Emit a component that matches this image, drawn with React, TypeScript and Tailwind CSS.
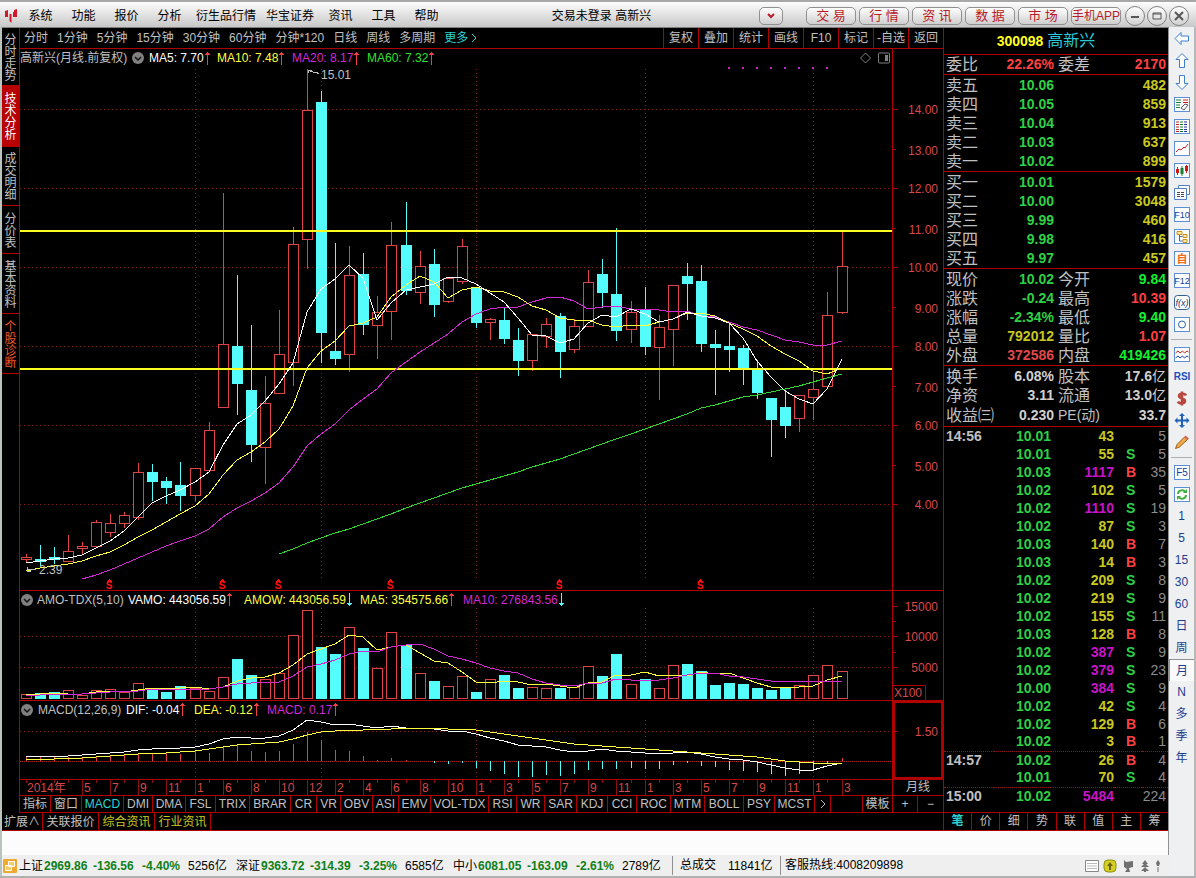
import type { ReactNode } from "react";

// Desktop trading terminal: menu bar, k-line chart with indicators, quote
// panel, tool strip and index status bar.

const RED = "#e04343";
const CYAN = "#54fcfc";
const GRID = "#861c1c";
const FRAME = "#b00000";

type Candle = [dir: 1 | 0, high: number, top: number, bottom: number, low: number];

// y positions on the price plot, 1 = up (hollow), 0 = down (filled)
const CANDLES: Candle[] = [
  [1, 554, 557, 559, 561], [0, 545, 559, 561, 565], [0, 547, 557, 559, 563], [1, 535, 551, 561, 561],
  [1, 542, 546, 548, 554], [1, 520, 522, 546, 546], [1, 514, 523, 532, 536], [1, 512, 515, 523, 527],
  [1, 463, 472, 517, 519], [0, 464, 472, 481, 500], [0, 477, 481, 487, 503], [0, 462, 485, 495, 510],
  [1, 468, 468, 495, 500], [1, 422, 430, 470, 470], [1, 193, 344, 407, 407], [0, 275, 346, 383, 414],
  [0, 325, 390, 444, 461], [1, 376, 403, 447, 483], [1, 310, 354, 393, 393], [1, 227, 244, 362, 385],
  [1, 69, 110, 239, 268], [0, 91, 102, 332, 362], [0, 243, 351, 358, 364], [1, 246, 275, 354, 371],
  [0, 253, 274, 324, 334], [1, 296, 312, 325, 358], [1, 222, 245, 311, 339], [0, 202, 245, 290, 294],
  [1, 251, 266, 292, 303], [0, 249, 264, 304, 316], [1, 278, 278, 301, 302], [1, 239, 246, 281, 283],
  [0, 287, 288, 322, 327], [1, 318, 319, 322, 339], [0, 308, 320, 338, 343], [0, 328, 340, 360, 375],
  [1, 334, 334, 360, 370], [1, 318, 324, 336, 347], [0, 313, 316, 351, 377], [1, 319, 326, 349, 352],
  [1, 270, 282, 326, 326], [0, 259, 274, 292, 307], [0, 228, 294, 330, 340], [1, 301, 312, 329, 342],
  [0, 287, 310, 346, 354], [1, 315, 327, 347, 399], [1, 285, 285, 329, 365], [0, 263, 276, 283, 319],
  [0, 265, 281, 343, 351], [0, 330, 344, 347, 394], [0, 322, 346, 349, 371], [0, 345, 348, 369, 384],
  [0, 360, 369, 392, 398], [0, 398, 398, 419, 456], [0, 390, 407, 425, 437], [1, 395, 395, 418, 431],
  [1, 372, 389, 397, 419], [1, 292, 315, 386, 386], [1, 232, 266, 312, 313],
];

const MA5 = [
  563, 561, 559, 558, 555, 548, 541, 531, 517, 503, 496, 490, 482, 472, 445, 424, 415, 401, 384, 363,
  312, 289, 279, 265, 278, 320, 303, 290, 287, 284, 277, 278, 284, 293, 302, 318, 335, 336, 343, 339,
  323, 315, 317, 309, 314, 322, 319, 312, 316, 318, 323, 338, 361, 377, 391, 399, 404, 389, 359,
];
const MA10 = [
  571, 568, 566, 564, 561, 556, 552, 545, 537, 530, 522, 514, 506, 494, 475, 460, 452, 442, 429, 406,
  368, 351, 341, 326, 323, 317, 297, 285, 276, 282, 298, 290, 287, 291, 292, 297, 306, 310, 318, 320,
  320, 325, 327, 325, 326, 322, 319, 313, 313, 316, 323, 329, 336, 346, 354, 361, 371, 374, 368,
];
const MA20 = [
  579, 575, 570, 564, 558, 552, 546, 541, 536, 529, 517, 508, 501, 493, 483, 467, 446, 434, 424, 410,
  399, 389, 373, 362, 352, 343, 334, 322, 314, 309, 307, 307, 302, 298, 297, 301, 309, 307, 306, 309,
  309, 310, 312, 311, 316, 317, 322, 327, 330, 335, 340, 342, 345, 345, 341,
];
const MA60 = [
  554, 549, 543, 538, 533, 529, 524, 519, 514, 508, 503, 498, 493, 488, 484, 480, 476, 472, 467, 463,
  459, 454, 449, 444, 439, 434, 429, 424, 419, 414, 408, 405, 401, 397, 395, 392, 389, 386, 382, 378, 374,
];

const VOLUME_TOPS = [
  694, 693, 692, 690, 695, 690, 689, 692, 683, 688, 692, 686, 688, 691, 677, 659, 675, 679, 673, 635,
  610, 647, 654, 627, 648, 668, 632, 645, 673, 681, 686, 676, 692, 679, 675, 688, 687, 688, 688, 687,
  666, 676, 654, 684, 679, 688, 665, 664, 671, 685, 683, 684, 688, 690, 687, 685, 675, 665, 671,
];
const VOL_MA5 = [
  695, 694, 693, 694, 694, 692, 691, 692, 690, 688, 689, 688, 687, 689, 687, 681, 678, 677, 673, 665,
  654, 649, 644, 635, 637, 650, 647, 645, 653, 661, 663, 672, 682, 683, 681, 682, 685, 684, 686, 688,
  683, 682, 675, 675, 672, 676, 675, 676, 672, 674, 673, 678, 683, 687, 687, 687, 686, 680, 676,
];
const VOL_MA10 = [
  695, 695, 694, 694, 694, 693, 692, 691, 691, 689, 689, 689, 689, 689, 687, 684, 683, 682, 682, 676,
  667, 664, 660, 654, 651, 652, 647, 645, 644, 649, 656, 659, 663, 668, 671, 673, 679, 683, 685, 686,
  683, 683, 679, 680, 680, 680, 678, 675, 673, 673, 676, 677, 679, 681, 681, 681, 681, 681, 681,
];

const MACD_BARS = [
  5, 5, 4, 4, 4, 4, 5, 6, 8, 8, 8, 7, 10, 8, 14, 16, 10, 9, 10, 17, 29, 21, 11, 10, 5, 1, 3, 1, 0, -2,
  -3, -2, -7, -10, -13, -16, -16, -14, -15, -13, -9, -8, -8, -7, -8, -8, -4, -2, -5, -6, -9, -10, -11,
  -13, -15, -13, -10, -2, 3,
];
const DIF = [
  757, 756, 756, 756, 755, 754, 753, 752, 750, 749, 748, 748, 747, 744, 739, 737, 738, 738, 736, 730,
  720, 722, 725, 724, 726, 728, 726, 728, 728, 729, 731, 731, 734, 738, 741, 745, 746, 747, 750, 752,
  751, 749, 751, 752, 753, 754, 753, 752, 754, 757, 759, 760, 762, 765, 768, 770, 770, 766, 763,
];
const DEA = [
  760, 759, 759, 758, 758, 757, 756, 755, 754, 753, 753, 752, 751, 749, 747, 745, 744, 743, 742, 739,
  735, 732, 731, 730, 730, 729, 729, 728, 728, 728, 729, 729, 730, 732, 734, 736, 738, 740, 742, 744,
  745, 746, 747, 748, 749, 750, 751, 752, 753, 754, 755, 756, 757, 759, 761, 762, 763, 764, 763,
];

const MONTHS = [
  "5", "7", "9", "11", "1", "6", "8", "10", "12", "2", "4", "6", "8", "10",
  "1", "3", "5", "7", "9", "11", "1", "3", "5", "7", "9", "11", "1", "3",
];

const barX = (i: number) => 26 + 14 * i + Math.floor((i + 3.5) / 15.2);
const line = (values: number[], start = 0) =>
  values.map((y, i) => `${barX(i + start)},${y}`).join(" ");

function Series({ values, start, color }: { values: number[]; start?: number; color: string }) {
  return <polyline points={line(values, start)} fill="none" stroke={color} strokeWidth="1" />;
}

function Grid({ rows, top, bottom }: { rows: number[]; top: number; bottom: number }) {
  return (
    <g stroke={GRID} strokeDasharray="1 3">
      {rows.map((y) => (
        <line key={y} x1="20" x2="892" y1={y + 0.5} y2={y + 0.5} />
      ))}
      {[12, 21, 32, 44, 56].map((i) => (
        <line key={i} x1={barX(i) + 0.5} x2={barX(i) + 0.5} y1={top} y2={bottom} />
      ))}
    </g>
  );
}

function Plot({ top, height, className, label, children }: {
  top: number;
  height: number;
  className: string;
  label: string;
  children: ReactNode;
}) {
  return (
    <svg
      role="img"
      aria-label={label}
      viewBox={`20 ${top} 872 ${height}`}
      preserveAspectRatio="none"
      shapeRendering="crispEdges"
      className={`block w-full ${className}`}
    >
      {children}
    </svg>
  );
}

function Bar({ x, top, bottom, up }: { x: number; top: number; bottom: number; up: boolean }) {
  return up ? (
    <rect x={x - 4.5} y={top + 0.5} width="10" height={bottom - top} fill="#000" stroke={RED} />
  ) : (
    <rect x={x - 5} y={top} width="11" height={bottom - top + 1} fill={CYAN} />
  );
}

function PricePlot() {
  return (
    <Plot top={67} height={523} className="h-[523px]" label="月线">
      <Grid rows={[109, 188, 267, 346, 425, 504]} top={69} bottom={578} />
      {CANDLES.map(([dir, high, top, bottom, low], i) => (
        <g key={i}>
          <rect x={barX(i)} y={high} width="1" height={low + 1 - high} fill={dir ? RED : CYAN} />
          <Bar x={barX(i)} top={top} bottom={bottom} up={dir === 1} />
        </g>
      ))}
      <rect x="20" y="230" width="872" height="2" fill="#ffff20" />
      <rect x="20" y="368" width="872" height="2" fill="#ffff20" />
      <Series values={MA60} start={18} color="#2fd62f" />
      <Series values={MA20} start={4} color="#d428d4" />
      <Series values={MA10} color="#ffff40" />
      <Series values={MA5} color="#ffffff" />
      {[728, 742, 756, 770, 784, 798, 812, 826].map((x) => (
        <rect key={x} x={x} y="67" width="2" height="2" fill="#c02ac0" />
      ))}
      <path d="M308 73V70H312M308 70L313 72L316 72L319 74" fill="none" stroke="#c0c0c0" />
      <path d="M27 567V571H31M27 569H36" fill="none" stroke="#c0c0c0" />
      <g fill="#c0c0c0" fontSize="12">
        <text x="321" y="79">15.01</text>
        <text x="39" y="574">2.39</text>
      </g>
      {/* ex-rights marks */}
      <g fill="#ff1010" fontSize="10" fontWeight="700" textAnchor="middle">
        {[109, 222, 278, 390, 559, 700].map((x) => (
          <g key={x}>
            <path d={`M${x} 579l3 3h-6z`} />
            <text x={x} y="589">S</text>
          </g>
        ))}
      </g>
    </Plot>
  );
}

function VolumePlot() {
  return (
    <Plot top={608} height={92} className="h-[92px]" label="AMO-TDX">
      <Grid rows={[636, 667]} top={608} bottom={698} />
      {VOLUME_TOPS.map((top, i) => (
        <Bar key={i} x={barX(i)} top={top} bottom={698} up={CANDLES[i][0] === 1} />
      ))}
      <Series values={VOL_MA5} color="#ffff40" />
      <Series values={VOL_MA10} color="#d428d4" />
    </Plot>
  );
}

function MacdPlot() {
  return (
    <Plot top={718} height={61} className="h-[61px]" label="MACD">
      <Grid rows={[731]} top={720} bottom={778} />
      <line x1="20" x2="892" y1="761.5" y2="761.5" stroke="#b02020" strokeDasharray="1 1" />
      {MACD_BARS.map((v, i) => (
        <rect
          key={i}
          x={barX(i)}
          y={v > 0 ? 761 - v : 761}
          width="1"
          height={Math.abs(v)}
          fill={v > 0 ? RED : CYAN}
        />
      ))}
      <Series values={DIF} color="#ffffff" />
      <Series values={DEA} color="#ffff40" />
    </Plot>
  );
}

function TimeAxis() {
  return (
    <Plot top={780} height={15} className="h-[15px]" label="日期">
      {CANDLES.map((_, i) => (
        <line
          key={i}
          x1={barX(i) + 0.5}
          x2={barX(i) + 0.5}
          y1="780"
          y2={i % 2 === 0 && i > 3 ? 795 : 783}
          stroke="#8c1010"
        />
      ))}
      <g fill="#d84848" fontSize="12">
        <text x="27" y="792">2014年</text>
        {MONTHS.map((m, i) => (
          <text key={i} x={barX(i * 2 + 4) + 2} y="792">{m}</text>
        ))}
      </g>
    </Plot>
  );
}

function Axis({ top, height, className, labels, ticks }: {
  top: number;
  height: number;
  className: string;
  labels: [string, number][];
  ticks: [number, number][];
}) {
  return (
    <svg viewBox={`893 ${top} 50 ${height}`} shapeRendering="crispEdges" className={`block w-[50px] ${className}`}>
      {ticks.map(([y, w]) => (
        <line key={y} x1="893" x2={893 + w} y1={y + 0.5} y2={y + 0.5} stroke={FRAME} />
      ))}
      <g fill="#d84848" fontSize="12" textAnchor="end">
        {labels.map(([text, y]) => (
          <text key={text} x="938" y={y}>{text}</text>
        ))}
      </g>
    </svg>
  );
}

const PRICE_LABELS: [string, number][] = [
  ["14.00", 114], ["13.00", 155], ["12.00", 193], ["11.00", 234], ["10.00", 272], ["9.00", 313],
  ["8.00", 351], ["7.00", 392], ["6.00", 430], ["5.00", 471], ["4.00", 509],
];
const PRICE_TICKS: [number, number][] = [
  [109, 5], [149, 3], [188, 5], [228, 3], [267, 5], [307, 3], [346, 5], [386, 3], [425, 5], [465, 3], [504, 5],
];

function Arrow({ down = false }: { down?: boolean }) {
  return (
    <svg viewBox="0 0 5 13" shapeRendering="crispEdges" className="h-[13px] w-[5px] shrink-0">
      {down ? (
        <path d="M2 0h1v10h2v1H4v1H3v1H2v-1H1v-1H0v-1h2z" fill={CYAN} />
      ) : (
        <path d="M2 13h1V3h2V2H4V1H3V0H2v1H1v1H0v1h2z" fill="#f04040" />
      )}
    </svg>
  );
}

function Toggle({ label }: { label: string }) {
  return (
    <button type="button" aria-label={label} className="shrink-0">
      <svg viewBox="0 0 12 12" className="block size-3">
        <circle cx="6" cy="6" r="6" fill="#808080" />
        <path d="M3 5l3 3 3-3" fill="none" stroke="#111" strokeWidth="1.5" />
      </svg>
    </button>
  );
}

function Legend({ text, className, arrow }: { text: string; className: string; arrow: "up" | "down" }) {
  return (
    <span className={`flex shrink-0 items-center gap-px ${className}`}>
      {text}
      <Arrow down={arrow === "down"} />
    </span>
  );
}

function ChartPane({ header, axis, children }: { header: ReactNode; axis: ReactNode; children: ReactNode }) {
  return (
    <section className="flex border-b border-[#b00000]">
      <div className="min-w-0 flex-1">
        {header}
        {children}
      </div>
      <div className="border-l border-[#b00000]">{axis}</div>
    </section>
  );
}

const PERIODS = [
  "分时", "1分钟", "5分钟", "15分钟", "30分钟", "60分钟", "分钟*120", "日线", "周线", "多周期",
];
const CHART_TOOLS = ["复权", "叠加", "统计", "画线", "F10", "标记", "-自选", "返回"];

const INDICATORS: [string, string][] = [
  ["指标", "w-[31px]"], ["窗口", "w-[31px]"], ["MACD", "w-[42px] text-[#2ad4d4]"], ["DMI", "w-[29px]"],
  ["DMA", "w-[33px]"], ["FSL", "w-[30px]"], ["TRIX", "w-[34px]"], ["BRAR", "w-[41px]"], ["CR", "w-[26px]"],
  ["VR", "w-[24px]"], ["OBV", "w-[32px]"], ["ASI", "w-[26px]"], ["EMV", "w-[32px]"], ["VOL-TDX", "w-[58px]"],
  ["RSI", "w-[28px]"], ["WR", "w-[28px]"], ["SAR", "w-[32px]"], ["KDJ", "w-[31px]"], ["CCI", "w-[29px]"],
  ["ROC", "w-[34px]"], ["MTM", "w-[34px]"], ["BOLL", "w-[39px]"], ["PSY", "w-[31px]"], ["MCST", "w-[40px]"],
];

function Chart() {
  return (
    <main className="min-w-0 flex-1 border-l border-[#b00000]">
      <nav className="flex h-[21px] items-stretch border-b border-[#b00000] text-[#c0c0c0]">
        <div className="flex flex-1 items-center gap-[9px] pl-1 whitespace-nowrap">
          {PERIODS.map((p) => (
            <button key={p} type="button">{p}</button>
          ))}
          <button type="button" className="flex items-center gap-0.5 text-[#2ad4d4]">
            更多
            <svg viewBox="0 0 8 10" className="h-2.5 w-2" fill="none" stroke="currentColor">
              <path d="M2 1l4 4-4 4" />
            </svg>
          </button>
        </div>
        {CHART_TOOLS.map((t) => (
          <button key={t} type="button" className="w-[35px] border-l border-[#b00000] text-center">{t}</button>
        ))}
      </nav>

      <ChartPane
        header={
          <div className="flex h-[18px] items-center">
            <h1 className="w-28 shrink-0">高新兴(月线.前复权)</h1>
            <Toggle label="主图" />
            <Legend text="MA5: 7.70" className="ml-[5px] w-[68px] text-white" arrow="up" />
            <Legend text="MA10: 7.48" className="w-[75px] text-[#ffff40]" arrow="up" />
            <Legend text="MA20: 8.17" className="w-[75px] text-[#d428d4]" arrow="up" />
            <Legend text="MA60: 7.32" className="flex-1 text-[#30e030]" arrow="up" />
            <svg viewBox="0 0 30 12" className="mr-0.5 h-3 w-[30px]" fill="none" stroke="#808080">
              <path d="M5.500 1l5 5-5 5-5-5z" />
              <rect x="18.500" y="1" width="11" height="10" rx="1" />
              <rect x="25" y="3" width="3" height="6" fill="#808080" stroke="none" />
            </svg>
          </div>
        }
        axis={<Axis top={49} height={541} className="h-[541px]" labels={PRICE_LABELS} ticks={PRICE_TICKS} />}
      >
        <PricePlot />
      </ChartPane>

      <ChartPane
        header={
          <div className="flex h-[17px] items-center pl-px">
            <Toggle label="AMO-TDX" />
            <span className="ml-1 w-[91px] shrink-0">AMO-TDX(5,10)</span>
            <Legend text="VAMO: 443056.59" className="w-[116px] text-white" arrow="up" />
            <Legend text="AMOW: 443056.59" className="w-[116px] text-[#ffff40]" arrow="down" />
            <Legend text="MA5: 354575.66" className="w-[103px] text-[#ffff40]" arrow="up" />
            <Legend text="MA10: 276843.56" className="text-[#d428d4]" arrow="down" />
          </div>
        }
        axis={
          <div className="flex flex-col">
            <Axis
              top={591}
              height={94}
              className="h-[94px]"
              labels={[["15000", 611], ["10000", 641], ["5000", 672]]}
              ticks={[[606, 5], [621, 3], [636, 5], [652, 3], [667, 5]]}
            />
            <span className="h-[15px] w-[33px] border-t border-r border-[#b00000] pl-px leading-[15px] text-[#d84848]">
              X100
            </span>
          </div>
        }
      >
        <VolumePlot />
      </ChartPane>

      <ChartPane
        header={
          <div className="flex h-[17px] items-center pl-px">
            <Toggle label="MACD" />
            <span className="ml-[5px] w-[88px] shrink-0">MACD(12,26,9)</span>
            <Legend text="DIF: -0.04" className="w-[68px] text-white" arrow="up" />
            <Legend text="DEA: -0.12" className="w-[73px] text-[#ffff40]" arrow="up" />
            <Legend text="MACD: 0.17" className="text-[#d428d4]" arrow="up" />
          </div>
        }
        axis={
          <div className="outline-2 -outline-offset-2 outline-[#b00000]">
            <Axis top={701} height={78} className="h-[78px]" labels={[["1.50", 736]]} ticks={[[731, 5]]} />
          </div>
        }
      >
        <MacdPlot />
      </ChartPane>

      <div className="flex h-4 border-b border-[#b00000]">
        <div className="min-w-0 flex-1">
          <TimeAxis />
        </div>
        <span className="w-[51px] border-l border-[#b00000] text-center leading-[15px]">月线</span>
      </div>

      <nav className="flex h-[17px] border-b border-[#b00000] whitespace-nowrap">
        {INDICATORS.map(([name, cls]) => (
          <button
            key={name}
            type="button"
            className={`shrink-0 border-r border-[#b00000] text-center leading-4 ${cls}`}
          >
            {name}
          </button>
        ))}
        <button
          type="button"
          aria-label="更多指标"
          className="flex w-4 shrink-0 items-center justify-center border-r border-[#b00000]"
        >
          <svg viewBox="0 0 8 10" className="h-2.5 w-2" fill="none" stroke="currentColor">
            <path d="M2 1l4 4-4 4" />
          </svg>
        </button>
        <span className="flex-1" />
        <button type="button" className="w-[30px] border-l border-[#b00000] leading-4">模板</button>
        <button type="button" className="w-[25px] border-l border-[#b00000] leading-4">+</button>
        <button type="button" className="w-[26px] border-l border-[#b00000] leading-4">−</button>
      </nav>
    </main>
  );
}

const SIDE_TABS: [string, string][] = [
  ["分时走势", "h-[58px]"],
  ["技术分析", "h-[61px] bg-[#b80000] text-white"],
  ["成交明细", "h-[59px]"],
  ["分价表", "h-[48px]"],
  ["基本资料", "h-[60px]"],
  ["个股诊断", "h-[60px] text-[#f05a28]"],
];

function SideTabs() {
  return (
    <nav className="flex w-[17px] shrink-0 flex-col">
      {SIDE_TABS.map(([name, cls]) => (
        <button
          key={name}
          type="button"
          className={`flex items-center justify-center border-b border-[#b00000] pt-0.5 ${cls}`}
        >
          <span className="w-3 leading-3 break-all">{name}</span>
        </button>
      ))}
    </nav>
  );
}

const G = "text-[#2fd044]";
const R = "text-[#ff4040]";
const Y = "text-[#c8c820]";
const W = "text-[#d0d0d0]";
const M = "text-[#c814c8]";

type QuoteRow = [label: string, value: string, tone: string, label2: string, value2: string, tone2: string];

const QUOTES: { className: string; rows: QuoteRow[] }[] = [
  { className: "h-5", rows: [["委比", "22.26%", R, "委差", "2170", R]] },
  {
    className: "h-[97px] pt-px",
    rows: [
      ["卖五", "10.06", G, "", "482", Y],
      ["卖四", "10.05", G, "", "859", Y],
      ["卖三", "10.04", G, "", "913", Y],
      ["卖二", "10.03", G, "", "637", Y],
      ["卖一", "10.02", G, "", "899", Y],
    ],
  },
  {
    className: "h-[97px] pt-px",
    rows: [
      ["买一", "10.01", G, "", "1579", Y],
      ["买二", "10.00", G, "", "3048", Y],
      ["买三", "9.99", G, "", "460", Y],
      ["买四", "9.98", G, "", "416", Y],
      ["买五", "9.97", G, "", "457", Y],
    ],
  },
  {
    className: "h-[97px] pt-px",
    rows: [
      ["现价", "10.02", G, "今开", "9.84", "text-[#10f030]"],
      ["涨跌", "-0.24", G, "最高", "10.39", R],
      ["涨幅", "-2.34%", G, "最低", "9.40", "text-[#10f030]"],
      ["总量", "792012", Y, "量比", "1.07", R],
      ["外盘", "372586", "text-[#e04848]", "内盘", "419426", "text-[#10f030]"],
    ],
  },
  {
    className: "h-[61px] pt-px",
    rows: [
      ["换手", "6.08%", W, "股本", "17.6亿", W],
      ["净资", "3.11", W, "流通", "13.0亿", W],
      ["收益㈢", "0.230", W, "PE(动)", "33.7", W],
    ],
  },
];

type Tick = [time: string, price: string, volume: string, side: "S" | "B" | "", count: string];

const TICKS: Tick[] = [
  ["14:56", "10.01", "43", "", "5"],
  ["", "10.01", "55", "S", "5"],
  ["", "10.03", "1117", "B", "35"],
  ["", "10.02", "102", "S", "5"],
  ["", "10.02", "1110", "S", "19"],
  ["", "10.02", "87", "S", "3"],
  ["", "10.03", "140", "B", "7"],
  ["", "10.03", "14", "B", "3"],
  ["", "10.02", "209", "S", "8"],
  ["", "10.02", "219", "S", "9"],
  ["", "10.02", "155", "S", "11"],
  ["", "10.03", "128", "B", "8"],
  ["", "10.02", "387", "S", "9"],
  ["", "10.02", "379", "S", "23"],
  ["", "10.00", "384", "S", "9"],
  ["", "10.02", "42", "S", "4"],
  ["", "10.02", "129", "B", "6"],
  ["", "10.02", "3", "B", "1"],
  ["14:57", "10.02", "26", "B", "4"],
  ["", "10.01", "70", "S", "4"],
  ["15:00", "10.02", "5484", "", "224"],
];

function Quote() {
  return (
    <aside className="flex w-[226px] shrink-0 flex-col border-x border-[#b00000] border-r-[#909090] text-sm">
      <h2 className="flex h-[27px] items-center justify-center gap-1 border-b border-[#b00000] pr-5">
        <span className="font-bold text-[#ffff20]">300098</span>
        <span className="text-base text-[#2ac8d8]">高新兴</span>
      </h2>
      {QUOTES.map(({ className, rows }, n) => (
        <div key={n} className={`border-b border-[#b00000] ${className}`}>
          <table className="w-full table-fixed border-collapse">
            <tbody>
              {rows.map(([label, value, tone, label2, value2, tone2]) => (
                <tr key={label} className="h-[19px] leading-[19px]">
                  <th scope="row" className="w-[54px] pl-0.5 text-left text-base leading-[19px] font-normal whitespace-nowrap">
                    {label}
                  </th>
                  <td className={`w-14 text-right font-bold ${tone}`}>{value}</td>
                  <td className="w-[54px] pl-1 text-base leading-[19px] whitespace-nowrap">
                    {label2 === "PE(动)" ? <span className="text-sm">{label2}</span> : label2}
                  </td>
                  <td className={`pr-0.5 text-right font-bold whitespace-nowrap ${tone2}`}>
                    {value2.replace("亿", "")}
                    {value2.endsWith("亿") && <span className="font-normal">亿</span>}
                  </td>
                </tr>
              ))}
            </tbody>
          </table>
        </div>
      ))}
      <table className="w-full table-fixed border-collapse font-bold">
        <tbody>
          {TICKS.map(([time, price, volume, side, count], i) => (
            <tr
              key={i}
              className={`h-[18px] leading-[17px] ${time && i > 0 ? "border-t border-dotted border-[#901818]" : ""}`}
            >
              <td className="w-[50px] pl-0.5">{time}</td>
              <td className={`w-[57px] text-right ${G}`}>{price}</td>
              <td className={`w-[63px] text-right ${Number(volume) > 300 ? M : Y}`}>{volume}</td>
              <td className={`w-7 pl-3 ${side === "B" ? R : G}`}>{side}</td>
              <td className="pr-0.5 text-right font-normal text-[#8c8c8c]">{count}</td>
            </tr>
          ))}
        </tbody>
      </table>
      <nav className="mt-auto flex h-[19px] border-y border-[#b00000] text-xs">
        {["笔", "价", "细", "势", "联", "值", "主", "筹"].map((t, i) => (
          <button
            key={t}
            type="button"
            className={`flex-1 leading-[17px] ${i === 0 ? "font-bold text-[#2ad4d4]" : "border-l border-[#b00000]"}`}
          >
            {t}
          </button>
        ))}
      </nav>
    </aside>
  );
}

function Boxed({ children }: { children?: ReactNode }) {
  return (
    <>
      <rect x="0.500" y="0.500" width="15" height="14" fill="#fff" stroke="#5b8fd8" />
      {children}
    </>
  );
}

function BoxText({ text }: { text: string }) {
  return (
    <Boxed>
      <text x="8" y="11" fontSize={text.length > 2 ? 9 : 10} textAnchor="middle" fill="#1440a0">{text}</text>
    </Boxed>
  );
}

const bigArrow = { fill: "#fff", stroke: "#3f7fd0" };

const TOOLS: ([string, ReactNode] | null)[] = [
  ["返回", <path d="M1 7.500l6-6v3.500h7.500v5H7v3.500z" {...bigArrow} />],
  ["上一个", <path d="M8 .5l6 6h-3.500v8h-5v-8H2z" {...bigArrow} />],
  ["下一个", <path d="M8 14.500l6-6h-3.500v-8h-5v8H2z" {...bigArrow} />],
  ["报价", <Boxed>
    <path d="M2 3h5M2 5.500h5M2 8h4M2 10.500h4" stroke="#18803a" />
    <path d="M9 3h5M9 5.500h5" stroke="#d02020" />
    <path d="M7 11l3 2 4-5-3-1z" fill="#fff" stroke="#556" />
  </Boxed>],
  ["行情", <Boxed>
    <g strokeDasharray="3 1">
      <path d="M2 3h4M2 5.500h4M2 8h4M2 10.500h4M2 12.500h4" stroke="#c02020" />
      <path d="M6 3h4M6 5.500h4M6 8h4M6 10.500h4M6 12.500h4" stroke="#187830" />
      <path d="M10 3h4M10 5.500h4M10 8h4M10 10.500h4M10 12.500h4" stroke="#2030a0" />
    </g>
  </Boxed>],
  ["分时图", <Boxed><path d="M2 11l3-3 2 1 3-3 1 1 3-4" fill="none" stroke="#c82020" /></Boxed>],
  ["K线图", <Boxed>
    <path d="M3.500 4v8M12.500 2v8" stroke="#d01818" />
    <path d="M8 3v10" stroke="#108030" />
    <path d="M2 6h3v4H2zM11 3h3v5h-3z" fill="#d01818" />
    <path d="M6.500 5h3v6h-3z" fill="#108030" />
  </Boxed>],
  ["报表", <g fill="#fff" stroke="#4f80c8">
    <path d="M4.500.5h11v9h-11z" />
    <path d="M.5 3.500h12v11H.5z" />
    <path d="M3 7.500h3M7 7.500h3M3 9.500h3M7 9.500h3M3 11.500h3M7 11.500h3" stroke="#445" />
  </g>],
  ["F10", <BoxText text="F10" />],
  ["板块", <Boxed>
    <path d="M3 2.500h5v3H3zM9 5.500h4v3H9zM9 10.500h4v3H9z" fill="#ffe9a0" stroke="#d09020" />
    <path d="M5.500 6v6h3M5.500 7.500h3" fill="none" stroke="#3f6fc0" />
  </Boxed>],
  ["自选", <Boxed><text x="8" y="12" fontSize="11" fontWeight="700" textAnchor="middle" fill="#f06a18">自</text></Boxed>],
  ["F12", <BoxText text="F12" />],
  ["公式", <g>
    <rect x=".5" y=".5" width="15" height="14" rx="3" fill="#fff" stroke="#2c6090" />
    <text x="8" y="11" fontSize="9" fontStyle="italic" textAnchor="middle" fill="#123a70">f(x)</text>
  </g>],
  ["圆", <Boxed><circle cx="8" cy="7.500" r="3.500" fill="none" stroke="#2a60b0" /></Boxed>],
  null,
  ["叠加", <Boxed>
    <path d="M1.500 6l2.500-2 2 2 2.500-2 2 2 2.500-2 1.500 1" fill="none" stroke="#d02020" />
    <path d="M1.500 11l2.500-2 2 2 2.500-2 2 2 2.500-2 1.500 1" fill="none" stroke="#2040c0" />
  </Boxed>],
  ["RSI", <text x="8" y="11" fontSize="10" fontWeight="700" textAnchor="middle" fill="#2050c0">RSI</text>],
  ["交易", <path d="M12 4.500C11 2 5 2 5 5s6 2 6 5-6 3-7 .5M8 .5v14" fill="none" stroke="#b8443c" strokeWidth="2.500" />],
  ["移动", <path d="M8 0l3 3H9v3.500h3.500v-2l3 3-3 3v-2H9V12h2l-3 3-3-3h2V8.500H3.500v2l-3-3 3-3v2H7V3H5z" fill="#1c60b8" />],
  ["画线", <g>
    <path d="M1.500 13.500l1.500-4 8-8 3 2.500-8.500 8z" fill="#f0a848" stroke="#a06020" />
    <path d="M10 2.500l1.500-2 3.500 3-2 1.500z" fill="#d86858" />
  </g>],
  null,
  ["F5", <BoxText text="F5" />],
  ["刷新", <Boxed>
    <path d="M4 7c0-4 6-5 7-2M12 8c0 4-6 5-7 2" fill="none" stroke="#3fae3f" strokeWidth="2" />
    <path d="M9 6h4V2zM7 9H3v4z" fill="#3fae3f" />
  </Boxed>],
];

function ToolStrip() {
  return (
    <nav className="flex w-[27px] shrink-0 flex-col items-stretch border-r-2 border-[#b8b8b8] bg-[#eef0f2] text-[#1c3c90]">
      {TOOLS.map((tool, i) =>
        tool ? (
          <button key={i} type="button" aria-label={tool[0]} className="flex h-[22px] items-center justify-center">
            <svg viewBox="0 0 16 15" className="h-[15px] w-4 overflow-visible">{tool[1]}</svg>
          </button>
        ) : (
          <div key={i} className="flex h-2 items-center px-0.5">
            <hr className="w-full border-[#b0b0b0]" />
          </div>
        ),
      )}
      {["1", "5", "15", "30", "60", "日", "周", "月", "N", "多", "季", "年"].map((t) => (
        <button
          key={t}
          type="button"
          className={`h-[22px] leading-[22px] ${t === "月" ? "border-t border-l border-[#909090] bg-[#fafafa]" : ""}`}
        >
          {t}
        </button>
      ))}
    </nav>
  );
}

const MENUS: [string, string][] = [
  ["系统", "w-[43px]"], ["功能", "w-[43px]"], ["报价", "w-[43px]"], ["分析", "w-[43px]"],
  ["衍生品行情", "w-[70px]"], ["华宝证券", "w-[58px]"], ["资讯", "w-[43px]"], ["工具", "w-[43px]"], ["帮助", "w-[43px]"],
];

const pill =
  "flex h-[18px] items-center justify-center rounded-[5px] border border-[#909090] bg-gradient-to-b from-white to-[#cfcfcf] whitespace-nowrap text-[#b81c28]";
const round =
  "flex size-5 items-center justify-center rounded-full border border-[#808080] bg-gradient-to-b from-white to-[#d0d0d0]";

function TitleBar() {
  return (
    <header className="flex h-[27px] items-center border-t-2 border-[#a8a8a8] bg-gradient-to-b from-[#fdfdfd] to-[#c8c8c8] pt-0.5 text-black">
      <svg viewBox="0 0 12 14" className="ml-[5px] h-3.5 w-3 shrink-0" fill="#d0182c">
        <path d="M0 2l3-1v7H0zM4.500 5h2v9l-2-2zM8 3h1V1l3-1v8H8z" />
      </svg>
      <nav className="ml-0.5 flex whitespace-nowrap">
        {MENUS.map(([m, w]) => (
          <button key={m} type="button" className={w}>{m}</button>
        ))}
      </nav>
      <span className="flex-1 pr-1 text-center whitespace-nowrap">交易未登录 高新兴</span>
      <button type="button" aria-label="展开" className={`mr-[23px] w-6 ${pill}`}>
        <svg viewBox="0 0 8 6" className="h-1.5 w-2" fill="none" stroke="#b81c28" strokeWidth="2">
          <path d="M1 1l3 3 3-3" />
        </svg>
      </button>
      <div className="flex gap-[3px] text-[13px]">
        {["交 易", "行 情", "资 讯", "数 据", "市 场"].map((t) => (
          <button key={t} type="button" className={`w-[50px] ${pill}`}>{t}</button>
        ))}
        <button type="button" className={`w-[50px] text-xs ${pill}`}>手机APP</button>
      </div>
      <div className="mr-[7px] ml-1 flex gap-0.5">
        <button type="button" aria-label="最小化" className={round}>
          <svg viewBox="0 0 10 10" className="size-2.5" stroke="#555" strokeWidth="2"><path d="M1 6h8" /></svg>
        </button>
        <button type="button" aria-label="最大化" className={round}>
          <svg viewBox="0 0 10 10" className="size-2.5" fill="none" stroke="#555">
            <path d="M1 2h8v6H1zM1 3h8" />
          </svg>
        </button>
        <button type="button" aria-label="关闭" className={round}>
          <svg viewBox="0 0 10 10" className="size-2.5" stroke="#555" strokeWidth="2"><path d="M1 1l8 8M9 1L1 9" /></svg>
        </button>
      </div>
    </header>
  );
}

const INDEXES = [
  ["上证", "2969.86", "-136.56", "-4.40%", "5256亿"],
  ["深证", "9363.72", "-314.39", "-3.25%", "6585亿"],
  ["中小", "6081.05", "-163.09", "-2.61%", "2789亿"],
];

function StatusBar() {
  return (
    <footer className="flex h-[21px] items-center bg-[#efefef] whitespace-nowrap text-black">
      <svg viewBox="0 0 14 14" className="mr-0.5 ml-px size-3.5 shrink-0">
        <rect width="14" height="14" rx="1" fill="#f0a830" />
        <path d="M5.500 2.500h6v5h-6zM2.500 6.500h6v5h-6z" fill="#f8cc70" stroke="#fff" />
      </svg>
      {INDEXES.map(([name, value, change, percent, amount]) => (
        <div key={name} className="flex shrink-0">
          <span className="w-[25px]">{name}</span>
          <span className="w-[49px] font-bold text-[#108018]">{value}</span>
          <span className="w-[49px] font-bold text-[#108018]">{change}</span>
          <span className="w-[46px] font-bold text-[#108018]">{percent}</span>
          <span className="w-12">{amount}</span>
        </div>
      ))}
      <span className="ml-0.5 border-l border-[#909090] pr-3 pl-[7px] leading-[19px]">总成交</span>
      <span className="w-[52px]">11841亿</span>
      <span className="border-l border-[#909090] pl-1 leading-[19px]">客服热线:4008209898</span>
      <svg viewBox="0 0 78 14" className="mr-1.5 ml-auto h-3.5 w-[78px] shrink-0">
        <path d="M.5 1.500h13v11H.5z" fill="#fff" stroke="#888" />
        <path d="M2 4.500h10M2 7h10M2 9.500h10" stroke="#bbb" />
        <rect x="19" y="1" width="12" height="12" rx="4" fill="#d8d020" stroke="#909010" />
        <path d="M25 3l3 4h-2v4h-2V7h-2z" fill="#666610" />
        <path d="M39 1l2 2 7-1v6l-4 1 1 4h-5l2-3-3-2z" fill="#707070" />
        <path d="M60 1l3 4h-6zM60 4l4 4h-8zM60 8l4 4h-3v1h-2v-1h-3z" fill="#707070" />
        <path d="M73 1l2 3-1 3h-2l-1-3zM72.500 8h1v5h-1z" fill="#707070" />
      </svg>
    </footer>
  );
}

export default function App() {
  return (
    <div className="min-w-[1100px] border-b-2 border-[#b0b0b0] bg-[#efefef] font-['Liberation_Sans','Noto_Sans_CJK_SC',sans-serif] text-xs text-[#c0c0c0]">
      <TitleBar />
      <div className="flex">
        <div className="min-w-0 flex-1 border-l-2 border-[#b8c4bc]">
          <div className="flex border-t border-[#808080] bg-black">
            <div className="min-w-0 flex-1">
              <div className="flex">
                <SideTabs />
                <Chart />
              </div>
              <nav className="flex h-[18px] border-b border-[#b00000] whitespace-nowrap">
                <button type="button" className="w-[41px] border-r border-[#b00000]">扩展∧</button>
                <button type="button" className="w-14 border-r border-[#b00000]">关联报价</button>
                <button type="button" className="w-14 border-r border-[#b00000] text-[#c8c820]">综合资讯</button>
                <button type="button" className="w-14 border-r border-[#b00000] text-[#c8c820]">行业资讯</button>
              </nav>
            </div>
            <Quote />
          </div>
          <div className="h-6 border-r border-[#909090] bg-[#fcfcfc]" />
          <StatusBar />
        </div>
        <ToolStrip />
      </div>
    </div>
  );
}
